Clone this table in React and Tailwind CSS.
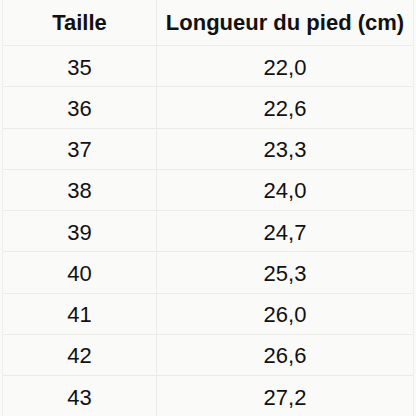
import React from "react";

const rows = [
  ["35", "22,0"],
  ["36", "22,6"],
  ["37", "23,3"],
  ["38", "24,0"],
  ["39", "24,7"],
  ["40", "25,3"],
  ["41", "26,0"],
  ["42", "26,6"],
  ["43", "27,2"],
];

export default function App() {
  return (
    <div
      className="w-[416px] h-[416px] overflow-hidden bg-[#fafaf8] text-[#111]"
      style={{ fontFamily: '"Liberation Sans", Arial, sans-serif' }}
    >
      <div className="mx-[2px] border-x border-[#efefec]">
        {/* Header */}
        <div className="flex h-[46px] border-b border-[#ebebe8]">
          <div className="w-[154px] flex items-center justify-center border-r border-[#ebebe8] text-[22px] font-bold">
            Taille
          </div>
          <div className="flex-1 flex items-center justify-center text-[22px] font-bold">
            Longueur du pied (cm)
          </div>
        </div>

        {/* Rows */}
        {rows.map((row, idx) => (
          <div key={idx} className="flex h-[41.25px] border-b border-[#ebebe8]">
            <div className="w-[154px] flex items-center justify-center border-r border-[#ebebe8] text-[22px] pt-[2px]">
              {row[0]}
            </div>
            <div className="flex-1 flex items-center justify-center text-[22px] pt-[2px]">
              {row[1]}
            </div>
          </div>
        ))}
      </div>
    </div>
  );
}
